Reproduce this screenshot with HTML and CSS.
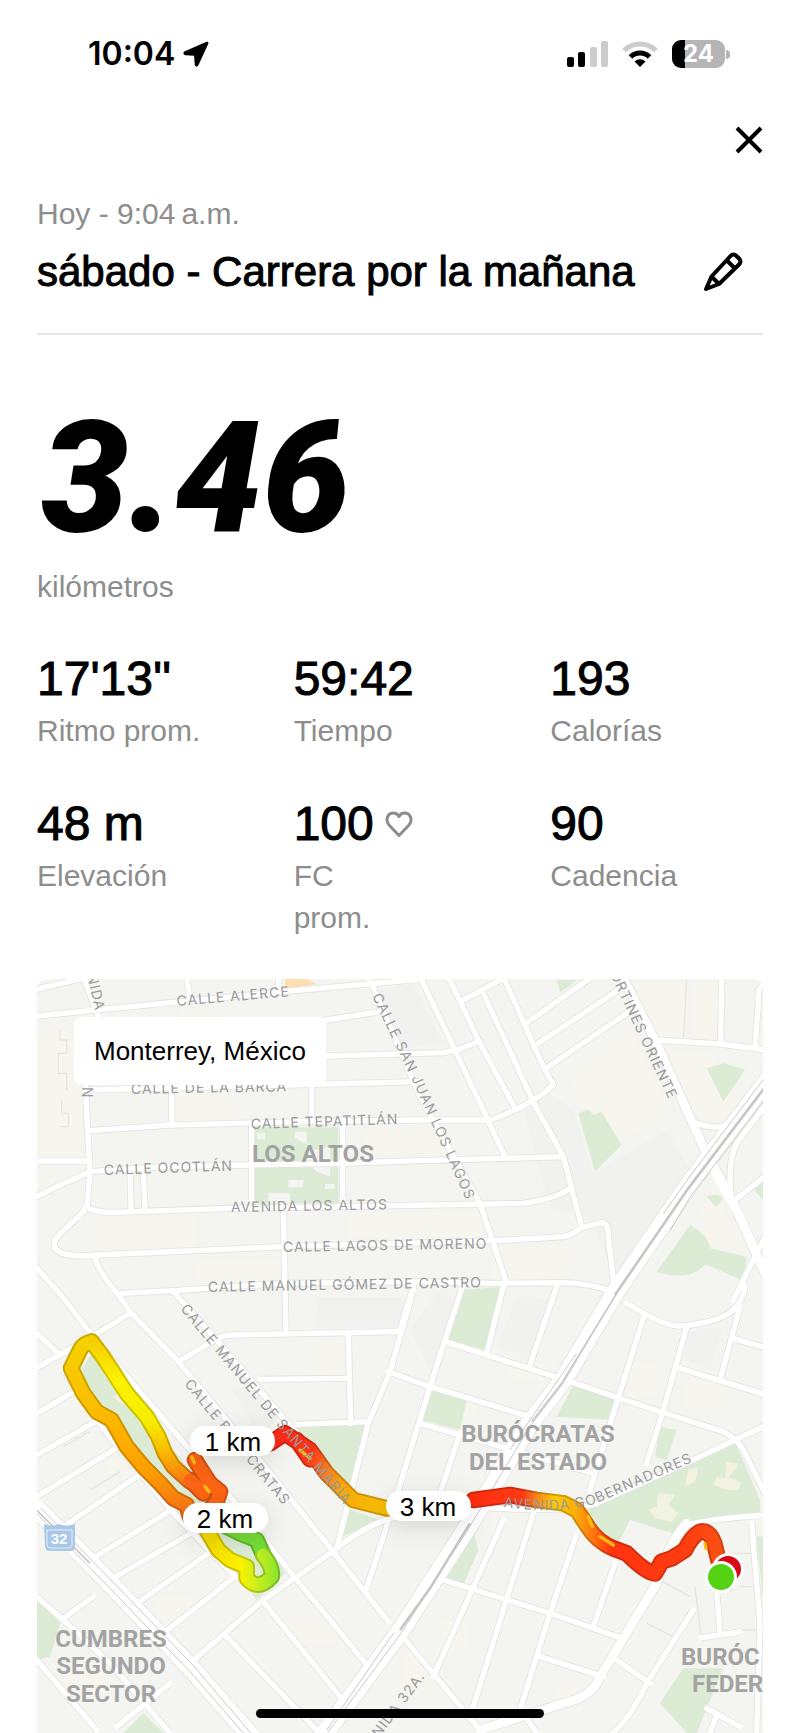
FILE: index.html
```html
<!DOCTYPE html>
<html lang="es">
<head>
<meta charset="utf-8">
<meta name="viewport" content="width=device-width, initial-scale=1">
<title>sábado - Carrera por la mañana</title>
<link rel="stylesheet" href="styles.css">
</head>
<body>
<div class="screen">
  <header class="status">
    <div class="status-left">
      <span class="clock">10:04</span>
      <svg class="icon-location" viewBox="0 0 26 26" aria-hidden="true"><path d="M23.500 .8 1.800 10.300c-2 .9-1.700 3.700.6 3.900l8.700.6.600 8.800c.2 2.300 2.900 2.500 3.700.6L25.200 3c.7-1.600-.3-2.800-1.700-2.200z"/></svg>
    </div>
    <div class="status-right">
      <svg class="icon-signal" viewBox="0 0 41 26" aria-hidden="true">
        <rect x="0" y="16" width="7" height="10" rx="2"/>
        <rect x="11" y="11" width="7" height="15" rx="2"/>
        <rect class="dim" x="23" y="6" width="7" height="20" rx="2"/>
        <rect class="dim" x="34" y="0" width="7" height="26" rx="2"/>
      </svg>
      <svg class="icon-wifi" viewBox="0 0 36 26" aria-hidden="true">
        <path class="arc dim-arc" d="M2 9.500a23 23 0 0 1 32 0"/>
        <path class="arc" d="M8.500 16a13.500 13.500 0 0 1 19 0"/>
        <path d="M18 26l-5.500-5.500a8 8 0 0 1 11 0z"/>
      </svg>
      <div class="battery"><span class="battery-level">24</span></div>
    </div>
  </header>

  <div class="toolbar">
    <button class="icon-button" type="button" aria-label="Cerrar">
      <svg class="icon-close" viewBox="0 0 28 28" aria-hidden="true"><path d="M2 2l24 24M26 2 2 26"/></svg>
    </button>
  </div>

  <main class="content">
    <section class="heading">
      <p class="date">Hoy - 9:04&#8201;a.m.</p>
      <div class="title-row">
        <h1 class="title">sábado - Carrera por la mañana</h1>
        <button class="icon-button edit" type="button" aria-label="Editar nombre">
          <svg class="icon-pencil" viewBox="0 0 40 40" aria-hidden="true"><path d="M3 37 8.500 24.500 27.500 4q3-3 6 0l2.500 2.500q3 3 0 6L16 32zM24 8.500l8 8M8.500 24.500l7.500 7.500"/></svg>
        </button>
      </div>
    </section>

    <section class="distance">
      <div class="distance-value">3.46</div>
      <div class="label">kilómetros</div>
    </section>

    <dl class="stats">
      <div class="stat"><dd class="value">17'13''</dd><dt class="label">Ritmo prom.</dt></div>
      <div class="stat"><dd class="value">59:42</dd><dt class="label">Tiempo</dt></div>
      <div class="stat"><dd class="value">193</dd><dt class="label">Calorías</dt></div>
      <div class="stat"><dd class="value">48 m</dd><dt class="label">Elevación</dt></div>
      <div class="stat"><dd class="value">100<svg class="icon-heart" viewBox="0 0 28 28" aria-hidden="true"><path d="M14 25.500 4 15C0 10 2.500 3 8.500 3 11 3 13 4.500 14 6.500 15 4.500 17 3 19.500 3 25.500 3 28 10 24 15z"/></svg></dd><dt class="label">FC<br>prom.</dt></div>
      <div class="stat"><dd class="value">90</dd><dt class="label">Cadencia</dt></div>
    </dl>

    <section class="map" aria-label="Mapa del recorrido">
      <svg class="map-canvas" viewBox="0 0 726 754" role="img" aria-label="Recorrido en Monterrey">
        <defs>
          <linearGradient id="g-east" gradientUnits="userSpaceOnUse" x1="1330" y1="0" x2="2070" y2="0">
            <stop offset="0" stop-color="#ff2e12"/><stop offset=".2" stop-color="#fb3a14"/><stop offset=".26" stop-color="#f58a1a"/><stop offset=".33" stop-color="#fdc800"/><stop offset=".41" stop-color="#fbb008"/><stop offset=".48" stop-color="#fd7a10"/><stop offset=".56" stop-color="#ff3310"/><stop offset=".85" stop-color="#ff3c10"/><stop offset="1" stop-color="#fa5012"/>
          </linearGradient>
          <linearGradient id="g-center" gradientUnits="userSpaceOnUse" x1="720" y1="1400" x2="1180" y2="1600">
            <stop offset="0" stop-color="#fb2818"/><stop offset=".26" stop-color="#fb3418"/><stop offset=".4" stop-color="#f68020"/><stop offset=".52" stop-color="#f9a80c"/><stop offset="1" stop-color="#f6ce00"/>
          </linearGradient>
          <linearGradient id="g-right" gradientUnits="userSpaceOnUse" x1="0" y1="1100" x2="0" y2="1560">
            <stop offset="0" stop-color="#f4cc00"/><stop offset=".28" stop-color="#fdf000"/><stop offset=".55" stop-color="#f6ee00"/><stop offset=".75" stop-color="#fabb00"/><stop offset="1" stop-color="#f7681a"/>
          </linearGradient>
          <linearGradient id="g-left" gradientUnits="userSpaceOnUse" x1="0" y1="1100" x2="0" y2="1640">
            <stop offset="0" stop-color="#f6d200"/><stop offset=".4" stop-color="#fbbd00"/><stop offset=".75" stop-color="#fd9e00"/><stop offset="1" stop-color="#f56c1a"/>
          </linearGradient>
          <linearGradient id="g-south" gradientUnits="userSpaceOnUse" x1="540" y1="0" x2="745" y2="0">
            <stop offset="0" stop-color="#f8dc00"/><stop offset=".45" stop-color="#faf200"/><stop offset=".7" stop-color="#c8ee20"/><stop offset="1" stop-color="#8ae42c"/>
          </linearGradient>
          <g id="streets">
            <path d="M0 62 180 20M0 140 400 100 760 65 1170 28M160 20 205 140M470 20l10 70M745 20l3 45M890 150l160-25M890 258l280-8 70-2q50-8 105-33M160 360l730-18 280-7M425 355v110M845 345v110M180 482l240-17 410-10 340-5h210q120-40 190-105l-30-55L1420 20M0 573h170M0 690l90-45q60-25 90-40l220-15 265-5 265-5 240-8 430-12M665 470v220M938 470v240M300 600l3 115M340 600l5 115"/>
            <path d="M165 330l7 140 8 130-8 100q-7 25-32 45l-45 40q-45 45 0 65 45 12 105 5l560-25 640-18 200-12q30-5 55-28l60-14q20 2 20 42l20 170M172 712q28 16 78 15l350-12 340-5 260-5 280-5q100-15 140-45"/>
            <path d="M760 720l8 365M195 860q5 40 75 120l30 45 145 150 215 260 245 305 170 215M270 970l160-8 330-22 410-5 220 5 210-2q80 2 150 27M430 965l130 145 300 350M0 870l105 120 80 105"/>
            <path d="M0 1070l85 80M0 1205l185-105 115-70M445 1175l110-65q20-14 45-15l500-10M955 1100l7 260M690 1228l260-3M800 1363l215-8M1150 960l-70 245-65 155-95 375M1075 1205l125 45 315 95M1300 940l-100 310-95 310-95 295"/>
            <path d="M20 1330l120-70M20 1455l195-110M20 1580l255-155M100 1670l220-150M165 1780l275-170M240 1830l260-150M320 1900l230-160M400 1990l215-170M480 2080l220-190 200-140q100-80 180-105l260-35"/>
            <path d="M185 1095l415 485 185 230 230 280M100 1200l130 190 210 250 175 180M700 1895l230 285M590 2000l270 280M480 2080l170 209M20 1880l80 70 150 140 170 199M100 1945l90-65M260 2270l160-130M20 2070l180 210"/>
            <path d="M1020 30l150 350 180 320 80 240M1175 30l100 210 150 320M1260 30l90 190 105 195M1300 90l120-65M1360 70l150 325 90 165 55 210M1495 155l185-130M1525 220l240-160M1555 290l235-160M1880 210l190 12 140 18M2075 25l-3 195M2210 50q-30-10-25 50l-10 130M2000 460q60 20 90 5l120-155M2105 690q-15-110 15-170l90-120M2110 695l100-80M2210 790l-45 90-55 110"/>
            <path d="M1790 1000q110 70 160 68 110-8 160-48 30-30 35-70M1245 1115l345 110 300 100 190 60q50 25 70 75l60 120M1420 950l-50 200M1580 950l-80 235M1150 950l-40 130M1840 1045l-90 285-70 230M1970 1070l-70 250-50 160M1950 1195l260 80M2130 1010l-60 220M2110 1105l100 30M1170 1360l520 150M1290 1390l-60 180M2210 1365l-200 95-310 140q-100 30-380 10"/>
            <path d="M1510 1630l-180 580M1420 1650l-210 470M1640 1690l-80 240-90 290M1755 1780l-65 190M1240 1830l320 100 215 75M1530 2060l190 60M1760 2070l100 70M1990 1920l-140 220q-40 90-100 149M1960 1670q40-20 250-35M2165 1660l25 300-10 329M2060 1860l10 130M2015 2003l115-17M1110 1990l240 290M2030 2215l100 55M2060 2235l-20 54M1480 2230l40 59"/>
          </g>
          <g id="avenues">
            <path d="M1780 25l100 195 140 310 90 170 100 220M1970 1660q-50 50-90 180l-170 280q-20 60-110 80l-250 80"/>
          </g>
          <g id="highways">
            <path d="M20 1615l220 225 240 250 180 205M2230 310l-250 330-220 320-160 270-100 130-180 300-210 325-230 310"/>
          </g>
          <g id="route">
            <path stroke="url(#g-east)" d="M2065 1770l-12-50q-15-40-43-35-25 15-45 55l-40 25-30 10-20 35q-25 0-85-60l-40-15q-50-20-80-70l-30-45-40-20-80-10-80-15-110 15"/>
            <path stroke="url(#g-center)" d="M1180 1610l-110 5-100-25-80-80-50-70-45-30-30-20-45 30M800 1410l40 58"/>
            <path stroke="url(#g-left)" d="M185 1115q-25 5-35 25l-27 55 37 75 40 55 45 25 45 80 50 60 50 50 40 45 40 20 10 35"/>
            <path stroke="url(#g-right)" d="M185 1115l30 40 30 45 45 70 60 70 35 60 20 50 25 40 50 45"/>
            <path stroke="#fb6414" d="M495 1470l25 40 20 30 30 25-10 30-40 45M480 1530l40 40"/>
            <path stroke="#76dc38" d="M590 1670l40 20 50 20 20 45"/>
            <path stroke="url(#g-south)" d="M530 1680l35 60 35 30 50 20v35q35 40 75-5 5-25-25-65"/>
          </g>
          <path id="p-lagos" d="M335 17 376 103 446 258"/>
          <path id="p-maria" d="M143 330 236 442 326 548"/>
          <path id="p-buro" d="M147 405 262 546"/>
          <path id="p-gob" d="M466 528q60 8 94-4l130-56"/>
        </defs>

        <g transform="translate(-7 -9) scale(.33333)">
          <rect class="land" x="0" y="0" width="2220" height="2300"/>
          <g class="sand">
            <path d="M20 180h140v380H20zM190 160h120v170H190zM450 120h130v50H450zM430 370h180v90H430zM20 620h140L20 690zM200 740h300v90H200zM500 870h250v60H500zM780 610h140v90H780zM1000 480h280v70h-280zM950 730h400v70H950zM1390 830h220v90h-220zM1620 330l180-160 110 240-60 60-130 60-60-90zM1790 30h170v170h-90zM1990 30h80v170h-80zM1890 240l160 10 100 220-140-30zM2010 700l60 10 90 140-130-30z"/>
            <path d="M850 1110h90v100h-90zM1220 1280h120v60h-120zM1800 1180h80v100h-80zM1960 1230h130v80h-130zM1440 1180h120v50h-120zM230 1470h120v40H230zM380 1880h110v60H380zM760 1960h160v60H760zM1230 1950h80v90h-80zM1580 2150h60v40h-60zM1120 2040h90v120h-90zM2000 2030h60v50h-60zM110 2080h130v90H110z"/>
          </g>
          <g class="stone">
            <path d="M1480 420l60-60 90 60 60 190 220-130 70 120-220 330-80-180-120-40zM1030 60l120-20 90 180-140 10zM860 980h260v90H860zM1460 980l100 10-50 170-110-30zM600 1250l80 10 70 80-60 60zM1140 1080l80-110 60 10-70 240zM1960 1090l120-20-40 120-80-20z"/>
          </g>
          <path class="amber" d="M765 27h65l30 15-95 15z"/>
          <g class="park">
            <path d="M675 472h250v228H675zM1580 30h60l-50 38zM2030 295l50-15 65 20-65 95zM1645 430l30-12 15 17 25-10 60 100-80 80zM1980 765q80 45 55 105-45 70-155 35zM2040 835l110 25-5 75-125-55zM2165 650l45-25v80zM2030 680q30-15 50 5l-20 25z"/>
            <path d="M1290 960l130-10-55 190-115-30zM1630 1245l125 40-15 65-160-10zM1205 1260l105 30-20 90-115-30zM1890 1370l50 10-30 90-35-10zM2115 1415l75 175v35l-190 35-40 40-160-50-40 80-70-45-40-75 270-120zM1330 1680l15 60-45 105-55-25zM1960 2095h120l-80 194h-30l-80-89zM2180 1700h20v200z"/>
            <path d="M800 1370l205-5-40 195-95-80zM950 1615l100 35-115 50zM185 1150l295 350 260 260 25 50-85 80-80-110-160-160-310-380zM20 1880l70 80-30 100-40 10zM340 2230l60 59H280z"/>
          </g>
          <path class="land" d="M795 485h35v35l30 20 40-10v90l-40-15-30-30 5-50-40-20zM775 630h45v22h-45zM885 642h28v15h-28zM715 670h65v28h-65zM680 488h25v20h-25z"/>
          <path class="pale" d="M2090 1475l35 5-10 20-20 20 40 20-10 20h-30l-45-15 10-25 25 5zM1885 1570l50 5-20 30 30 25-20 25-50-10-20-25 25-10zM1975 1500l30-10-10 45-30 15zM250 1280l30-15 20 25-20 15z"/>
          <g class="detail"><path d="M90 180v30h20v40H85v60h25v50M95 390v40h20v40H90M1970 30l-10 180M1995 1850l20 160M1850 1960l80 40M1870 1820l110 60M2100 1750h90M2130 1850h70M2130 1980h70M2040 1860h70M100 1430l80-45M180 1560l90-55"/></g>
          <use class="case" href="#streets"/>
          <use class="case case-wide" href="#avenues"/>
          <use class="case case-highway" href="#highways"/>
          <use class="road" href="#streets"/>
          <use class="road road-wide" href="#avenues"/>
          <use class="road road-highway" href="#highways"/>
          <path class="road road-wide" d="M2030 560l60 110 40 70 40 90"/>
          <g class="lane">
            <path d="M20 1630l220 225 240 250 160 184M32 1614l220 225 240 250 170 200M2228 322l-250 330-220 320-160 270-100 130-180 300-210 325-215 290M2220 302l-250 330-70 100M2230 352l-250 330-60 100M1640 1150l-140 200-60 90M1090 1990l-200 290"/>
          </g>
          <path class="rail" d="M2225 325l-250 330-220 320M1320 1660l-120 195-90 125"/>
          <path class="rail rail-thin" d="M1760 970l-165 270-90 115M20 1620l160 160"/>

          <use class="trail-edge" href="#route"/>
          <use class="trail" href="#route"/>
          <path class="trail-spark" d="M810 1440l30 25M1675 1640l12 30M1710 1700l40 25M2025 1720l3 15M485 1460l8 18M525 1550l12 15"/>
        </g>

        <g class="street-name">
          <text transform="translate(140 27) rotate(-5)">CALLE ALERCE</text>
          <text transform="translate(50 -4) rotate(77)">NIDA</text>
          <text transform="translate(45 108) rotate(90)">N</text>
          <text transform="translate(94 115) rotate(-1)">CALLE DE LA BARCA</text>
          <text transform="translate(214 150) rotate(-2)">CALLE TEPATITLÁN</text>
          <text transform="translate(67 196) rotate(-2)">CALLE OCOTLÁN</text>
          <text transform="translate(194 233) rotate(-1)">AVENIDA LOS ALTOS</text>
          <text transform="translate(246 273) rotate(-1)">CALLE LAGOS DE MORENO</text>
          <text transform="translate(171 313) rotate(-1)">CALLE MANUEL GÓMEZ DE CASTRO</text>
          <text transform="translate(573 -5) rotate(65)">ORTINES ORIENTE</text>
          <text><textPath href="#p-lagos">CALLE SAN JUAN LOS LAGOS</textPath></text>
          <text><textPath href="#p-maria">CALLE MANUEL DE SANTA MARÍA</textPath></text>
          <text><textPath href="#p-buro">CALLE BURÓCRATAS</textPath></text>
          <text><textPath href="#p-gob">AVENIDA GOBERNADORES</textPath></text>
          <text transform="translate(342 759) rotate(-53)">NIDA 32A.</text>
        </g>
        <g class="district">
          <text x="276" y="183">LOS ALTOS</text>
          <text x="501" y="463">BURÓCRATAS</text>
          <text x="501" y="491">DEL ESTADO</text>
          <text x="74" y="668">CUMBRES</text>
          <text x="74" y="695">SEGUNDO</text>
          <text x="74" y="723">SECTOR</text>
          <text class="district-start" x="644" y="686">BURÓC</text>
          <text class="district-start" x="655" y="713">FEDER</text>
        </g>
        <g class="shield">
          <path d="M7 545q8 3 15 0 8 3 16 0v22q0 5-5 5H13q-5 0-5-5z"/>
          <path class="shield-line" d="M10 551h25v15q0 3-3 3H13q-3 0-3-3z"/>
          <text x="22" y="565">32</text>
        </g>
        <g class="markers">
          <circle class="ring" cx="691" cy="590" r="16"/><circle class="finish" cx="691" cy="590" r="13"/>
          <circle class="ring" cx="684" cy="598" r="16"/><circle class="start" cx="684" cy="598" r="13"/>
        </g>
        <g class="pill">
          <rect x="153" y="447" width="85" height="30" rx="15"/><text x="196" y="472">1 km</text>
          <rect x="146" y="524" width="85" height="30" rx="15"/><text x="188" y="549">2 km</text>
          <rect x="349" y="512" width="85" height="30" rx="15"/><text x="391" y="537">3 km</text>
        </g>
      </svg>
      <div class="place">Monterrey, México</div>
    </section>
  </main>
  <div class="home-indicator"></div>
</div>
</body>
</html>
```
FILE: styles.css
```css
* { box-sizing: border-box; }

body {
  margin: 0;
  background: #fff;
  color: #000;
  font-family: "Liberation Sans", Arial, sans-serif;
}

.screen { position: relative; overflow: hidden; }

svg { display: block; }

.status {
  display: flex;
  justify-content: space-between;
  align-items: center;
  height: 108px;
  padding: 0 70px 0 88px;
}

.status-left, .status-right { display: flex; align-items: center; }
.status-left { gap: 8px; }
.status-right { gap: 14px; }

.clock { font: 600 32px/40px Inter, sans-serif; }

.icon-location { width: 26px; height: 26px; }
.icon-signal { width: 41px; height: 26px; }
.icon-wifi { width: 36px; height: 26px; }
.dim { fill: #ccc; }
.arc { fill: none; stroke: #000; stroke-width: 5; }
.dim-arc { stroke: #ccc; }

.battery { display: flex; align-items: center; gap: 1px; }
.battery::after {
  content: "";
  width: 4px;
  height: 9px;
  border-radius: 0 4px 4px 0;
  background: #b5b5b5;
}
.battery-level {
  width: 53px;
  height: 28px;
  border-radius: 9px;
  background: linear-gradient(to right, #000 24%, #b5b5b5 24%);
  color: #fff;
  font: 700 24px/28px Inter, sans-serif;
  text-align: center;
}

.toolbar {
  display: flex;
  justify-content: flex-end;
  align-items: center;
  height: 64px;
  padding: 0 37px;
}

.icon-button {
  padding: 0;
  border: 0;
  background: none;
  color: #000;
}
.icon-button svg { fill: none; stroke: currentColor; stroke-width: 4; stroke-linejoin: round; }
.icon-close { width: 28px; height: 28px; }
.icon-pencil { width: 40px; height: 40px; }
.edit { padding-right: 20px; }

.content { padding: 21px 37px 0; }

.heading { padding-bottom: 32px; border-bottom: 2px solid #e5e5e5; }

.date, .label {
  margin: 0;
  color: #8d8d8d;
  font-size: 30px;
  line-height: 42px;
}

.title-row {
  display: flex;
  justify-content: space-between;
  align-items: center;
  padding-top: 8px;
}

.title {
  margin: 0;
  font-size: 42px;
  font-weight: 400;
  line-height: 58px;
  -webkit-text-stroke: 1px #000;
}

.distance { padding-top: 63px; }
.distance-value {
  padding: 0 0 8px 4px;
  font: italic 900 156px/160px Roboto, sans-serif;
}

.stats {
  display: grid;
  grid-template-columns: repeat(3, 1fr);
  gap: 44px;
  margin: 43px 0 40px;
}

.value {
  display: flex;
  align-items: center;
  gap: 11px;
  margin: 0 0 3px;
  font-size: 48px;
  line-height: 56px;
  -webkit-text-stroke: 1px #000;
}

.icon-heart { width: 28px; height: 28px; fill: none; stroke: #8d8d8d; stroke-width: 3; stroke-linejoin: round; }

.map {
  position: relative;
  overflow: hidden;
  border-radius: 10px 10px 0 0;
}
.map-canvas { width: 100%; height: auto; }

.place {
  position: absolute;
  top: 38px;
  left: 37px;
  padding: 18px 20px;
  border-radius: 8px;
  background: #fff;
  font-size: 26px;
  line-height: 32px;
}

.land { fill: #f4f4f1; }
.sand { fill: #f7f6ee; }
.stone { fill: #f1f1f0; }
.park { fill: #dcecd4; }
.pale { fill: #f3f1e2; }
.amber { fill: #fbdfb0; }
.detail { fill: none; stroke: #e6e6e0; stroke-width: 4; }

.case, .road, .lane, .rail { fill: none; stroke-linejoin: round; }
.case { stroke: #e3e3e0; stroke-width: 21; }
.case-wide { stroke-width: 31; }
.case-highway { stroke-width: 59; }
.road { stroke: #fff; stroke-width: 16; stroke-linecap: round; }
.road-wide { stroke-width: 26; }
.road-highway { stroke-width: 54; }
.lane { stroke: #cbc9c7; stroke-width: 3; }
.rail { stroke: #cbc6c6; stroke-width: 8; }
.rail-thin { stroke-width: 5; }

.trail-edge, .trail { fill: none; stroke-linecap: round; stroke-linejoin: round; }
.trail-edge { stroke-width: 50; filter: brightness(0.82); }
.trail { stroke-width: 38; }
.trail-spark { fill: none; stroke: #fdb910; stroke-width: 10; stroke-linecap: round; }

.street-name { fill: #9a9a9a; font: 400 14px Inter, sans-serif; letter-spacing: 1px; }
.district { fill: #a3a3a3; font: 700 24px Roboto, sans-serif; text-anchor: middle; }
.district .district-start { text-anchor: start; }

.shield { fill: #a9c8e8; }
.shield-line { fill: none; stroke: #e3eef8; stroke-width: 1; }
.shield text { fill: #fff; font: 700 15px "Liberation Sans", sans-serif; text-anchor: middle; }

.ring { fill: #fff; }
.finish { fill: #d60a16; }
.start { fill: #53d313; }

.pill { font-size: 26px; text-anchor: middle; }
.pill rect { fill: #fff; filter: drop-shadow(0 6px 12px rgba(0, 0, 0, 0.12)); }

.home-indicator {
  position: absolute;
  bottom: 15px;
  left: 50%;
  width: 36%;
  height: 9px;
  border-radius: 5px;
  background: #000;
  transform: translateX(-50%);
}
```
